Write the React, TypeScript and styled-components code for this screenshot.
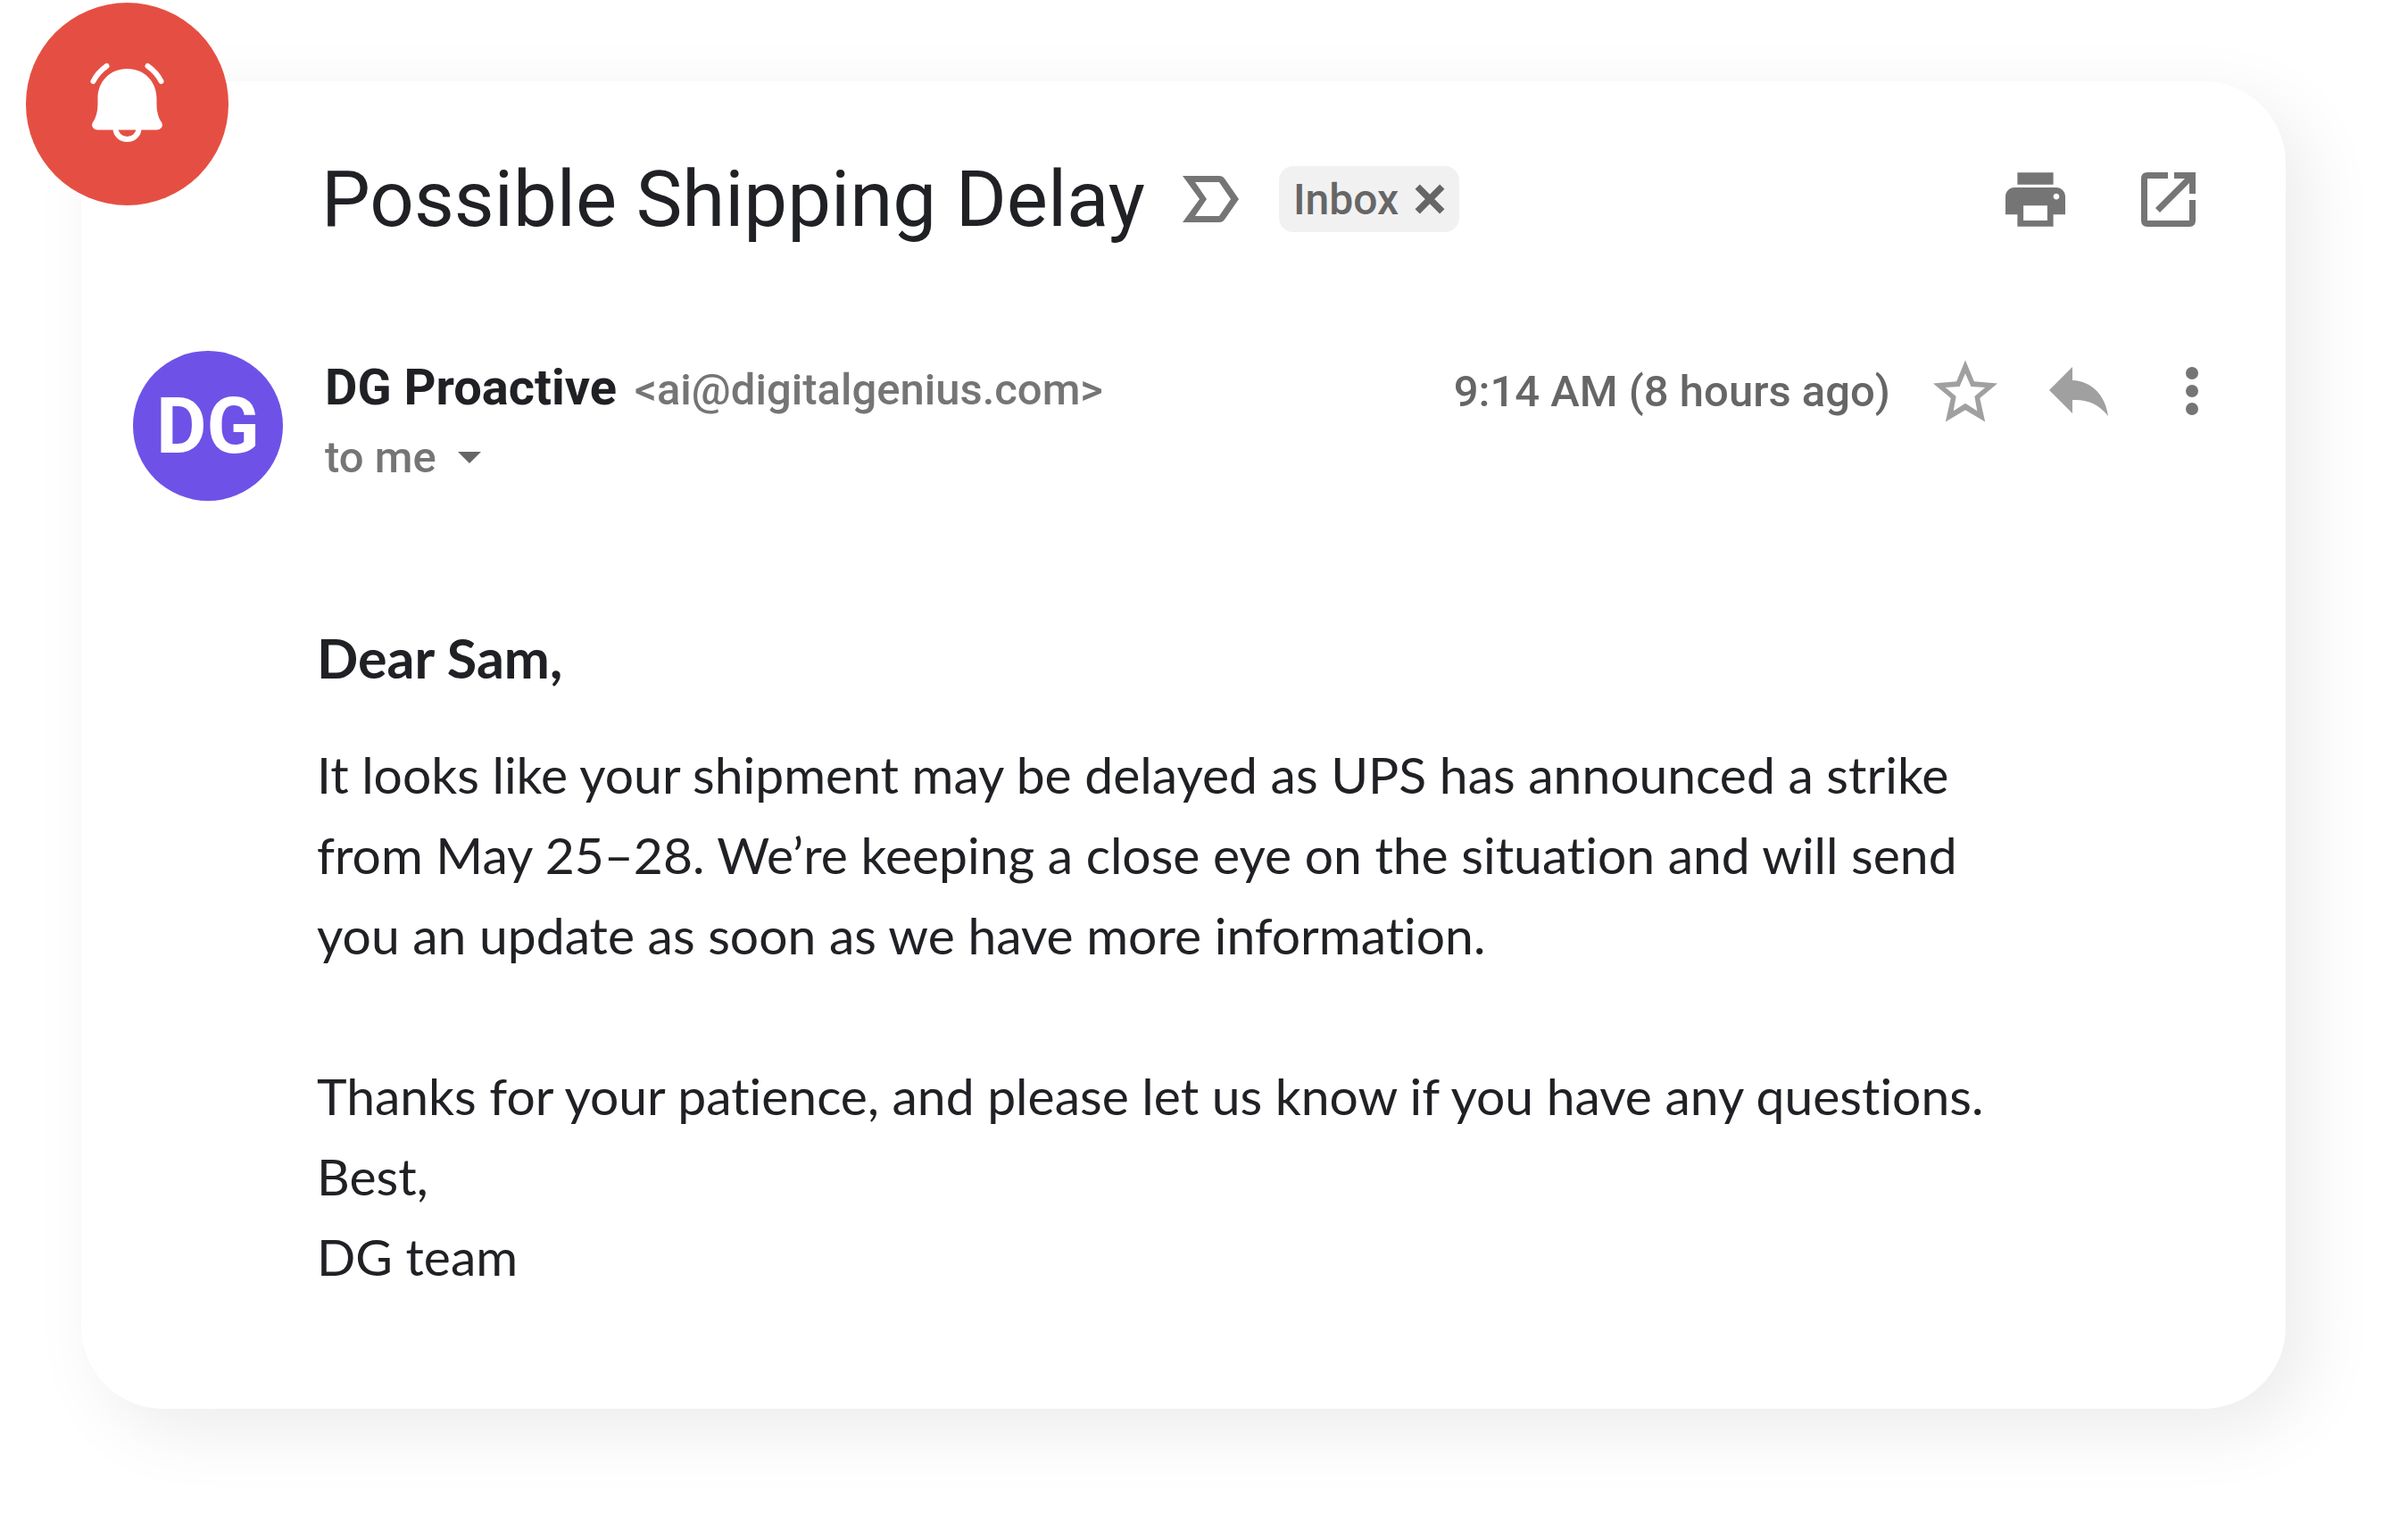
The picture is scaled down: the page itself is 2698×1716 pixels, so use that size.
import React from 'react';
import styled, { createGlobalStyle, css } from 'styled-components';

const GlobalStyle = createGlobalStyle`
  *, *::before, *::after { box-sizing: border-box; }
  body {
    margin: 0;
    background: #ffffff;
    color: #202125;
    font-family: Roboto, "Liberation Sans", sans-serif;
  }
`;

const Page = styled.div`
  padding: 91px 137px 137px 91px;
`;

const Card = styled.main`
  position: relative;
  padding: 82px 98px 126px 58px;
  border-radius: 92px;
  background: #ffffff;
  box-shadow: 24px 24px 80px rgba(0, 0, 0, 0.08);
`;

const AlertBadge = styled.div`
  position: absolute;
  top: -88px;
  left: -62px;
  width: 227px;
  height: 227px;
  border-radius: 50%;
  background: #e54f43;

  svg { display: block; }
`;

const SubjectRow = styled.header`
  display: flex;
  align-items: center;
  height: 100px;
  padding: 0 3px 0 211px;
`;

const Subject = styled.h1`
  margin: 0 42px 0 0;
  font-size: 87px;
  font-weight: 400;
  line-height: 100px;
  white-space: nowrap;
`;

const buttonReset = css`
  display: flex;
  align-items: center;
  margin: 0;
  padding: 0;
  border: 0;
  background: none;
  color: inherit;
  font: inherit;
  cursor: pointer;
`;

const IconButton = styled.button<{ $tone?: string }>`
  ${buttonReset}
  flex: none;
  color: ${({ $tone }) => $tone ?? '#757575'};
`;

const Label = styled.span`
  display: flex;
  align-items: center;
  gap: 18px;
  height: 74px;
  margin-left: 45px;
  padding: 0 16px;
  border-radius: 16px;
  background: #f1f1f1;
  color: #666666;
  font-size: 48px;
  font-weight: 500;
  white-space: nowrap;
`;

const Actions = styled.div<{ $gap: number }>`
  display: flex;
  align-items: center;
  gap: ${({ $gap }) => $gap}px;
  margin-left: auto;
`;

const SenderRow = styled.section`
  display: flex;
  margin-top: 120px;
`;

const Avatar = styled.div`
  flex: none;
  display: flex;
  align-items: center;
  justify-content: center;
  width: 168px;
  height: 168px;
  margin-right: 47px;
  border-radius: 50%;
  background: #6e52e8;
  color: #ffffff;
  font-size: 87px;
  font-weight: 700;
`;

const SenderDetails = styled.div`
  flex: 1;
  min-width: 0;
`;

const SenderLine = styled.div`
  display: flex;
  align-items: center;
  height: 90px;
`;

const Identity = styled.p`
  display: flex;
  align-items: baseline;
  gap: 20px;
  margin: 0;
  padding-bottom: 8px;
  white-space: nowrap;
`;

const SenderName = styled.strong`
  font-size: 56px;
  font-weight: 700;
`;

const Address = styled.span`
  color: #757575;
  font-size: 49px;
  font-weight: 500;
`;

const Sent = styled.time`
  color: #666666;
  font-size: 49px;
  font-weight: 500;
  white-space: nowrap;
`;

const Recipient = styled.button`
  ${buttonReset}
  gap: 24px;
  height: 58px;
  color: #757575;
  font-size: 49px;
  font-weight: 500;
`;

const Caret = styled.span`
  border: 13px solid transparent;
  border-top-color: #666666;
  border-bottom: 0;
`;

const Body = styled.article`
  margin-top: 131px;
  padding-left: 206px;
  font-family: Lato, "Open Sans", sans-serif;
  font-size: 57px;
  font-variant-ligatures: none;
  line-height: 90px;
`;

const Greeting = styled.p`
  margin: 0 0 40px;
  font-size: 61px;
  font-weight: 700;
`;

const Paragraph = styled.p`
  margin: 0;

  & + & { margin-top: 90px; }
`;

const Bell = () => (
  <svg width="227" height="227" viewBox="29 3 227 227" fill="none" aria-hidden="true">
    <path d="M142.500 77c-19 0-33 14-33 33v6c0 9-2 16-5.500 21c-2.500 4 .5 8.500 5.500 8.500h66c5 0 8-4.500 5.500-8.500c-3.500-5-5.500-12-5.500-21v-6c0-19-14-33-33-33Z" fill="#fff" />
    <path d="M129.500 144a13 12 0 0 0 26 0" stroke="#fff" strokeWidth="6" />
    <path d="M104.500 91q5-10 15-17M180.500 91q-5-10-15-17" stroke="#fff" strokeWidth="6" strokeLinecap="round" />
  </svg>
);

const Importance = () => (
  <svg width="63" height="52" viewBox="0 0 63 52" aria-hidden="true">
    <path fill="currentColor" fillRule="evenodd" d="M0 0h41q4 0 6 3l16 23l-16 23q-2 3-6 3H0l19-26ZM14 7l13 19l-13 19h27l13-19L41 7Z" />
  </svg>
);

const Close = () => (
  <svg width="34" height="34" viewBox="0 0 32 32" aria-hidden="true">
    <path d="M3 3l26 26M29 3L3 29" stroke="currentColor" strokeWidth="7" />
  </svg>
);

const Print = () => (
  <svg width="67" height="61" viewBox="2 3 20 18" aria-hidden="true">
    <path fill="currentColor" fillRule="evenodd" d="M19 8H5c-1.660 0-3 1.340-3 3v6h4v4h12v-4h4v-6c0-1.660-1.340-3-3-3zm-3 11H8v-5h8v5zm3-7c-.550 0-1-.450-1-1s.450-1 1-1 1 .450 1 1-.450 1-1 1zm-1-9H6v4h12V3z" />
  </svg>
);

const OpenInNew = () => (
  <svg width="61" height="61" viewBox="0 0 61 61" aria-hidden="true">
    <path d="M30 3.500H7q-3.500 0-3.500 3.500v47q0 3.500 3.500 3.500h47q3.500 0 3.500-3.500V31" fill="none" stroke="currentColor" strokeWidth="7" />
    <path d="M37 0h24v24h-7V12L21 45l-5-5L49 7H37Z" fill="currentColor" />
  </svg>
);

const Star = () => (
  <svg width="72" height="70" viewBox="0 0 73 70" aria-hidden="true">
    <path fill="currentColor" fillRule="evenodd" d="M36.500 0l10 24l26.500 2.500l-20 16.500l6 27l-22.500-13.500L14 70l6-27L0 26.500l26.500-2.500ZM36.500 15l-6.500 15l-16 1l12 10l-3 16.500l13.500-8.500l13.500 8.500l-3-16.500l12-10l-16-1Z" />
  </svg>
);

const Reply = () => (
  <svg width="66" height="55" viewBox="0 0 66 55" aria-hidden="true">
    <path fill="currentColor" d="M0 26L26 0v15c22 1 37 17 40 40c-10-13-23-19-40-18v15Z" />
  </svg>
);

const More = () => (
  <svg width="14" height="54" viewBox="0 0 14 54" fill="currentColor" aria-hidden="true">
    <circle cx="7" cy="7" r="7" />
    <circle cx="7" cy="27" r="7" />
    <circle cx="7" cy="47" r="7" />
  </svg>
);

export default function App() {
  return (
    <>
      <GlobalStyle />
      <Page>
        <Card>
          <AlertBadge><Bell /></AlertBadge>
          <SubjectRow>
            <Subject>Possible Shipping Delay</Subject>
            <IconButton aria-label="Mark as important"><Importance /></IconButton>
            <Label>
              Inbox
              <IconButton $tone="#666666" aria-label="Remove label Inbox"><Close /></IconButton>
            </Label>
            <Actions $gap={85}>
              <IconButton aria-label="Print"><Print /></IconButton>
              <IconButton aria-label="Open in new window"><OpenInNew /></IconButton>
            </Actions>
          </SubjectRow>
          <SenderRow>
            <Avatar>DG</Avatar>
            <SenderDetails>
              <SenderLine>
                <Identity>
                  <SenderName>DG Proactive</SenderName>
                  <Address>&lt;ai@digitalgenius.com&gt;</Address>
                </Identity>
                <Actions $gap={48}>
                  <Sent>9:14 AM (8 hours ago)</Sent>
                  <Actions $gap={58}>
                    <IconButton $tone="#a0a0a0" aria-label="Star"><Star /></IconButton>
                    <Actions $gap={87}>
                      <IconButton $tone="#a0a0a0" aria-label="Reply"><Reply /></IconButton>
                      <IconButton aria-label="More options"><More /></IconButton>
                    </Actions>
                  </Actions>
                </Actions>
              </SenderLine>
              <Recipient>to me <Caret /></Recipient>
            </SenderDetails>
          </SenderRow>
          <Body>
            <Greeting>Dear Sam,</Greeting>
            <Paragraph>
              It looks like your shipment may be delayed as UPS has announced a strike<br />
              from May 25–28. We’re keeping a close eye on the situation and will send<br />
              you an update as soon as we have more information.
            </Paragraph>
            <Paragraph>
              Thanks for your patience, and please let us know if you have any questions.<br />
              Best,<br />
              DG team
            </Paragraph>
          </Body>
        </Card>
      </Page>
    </>
  );
}
